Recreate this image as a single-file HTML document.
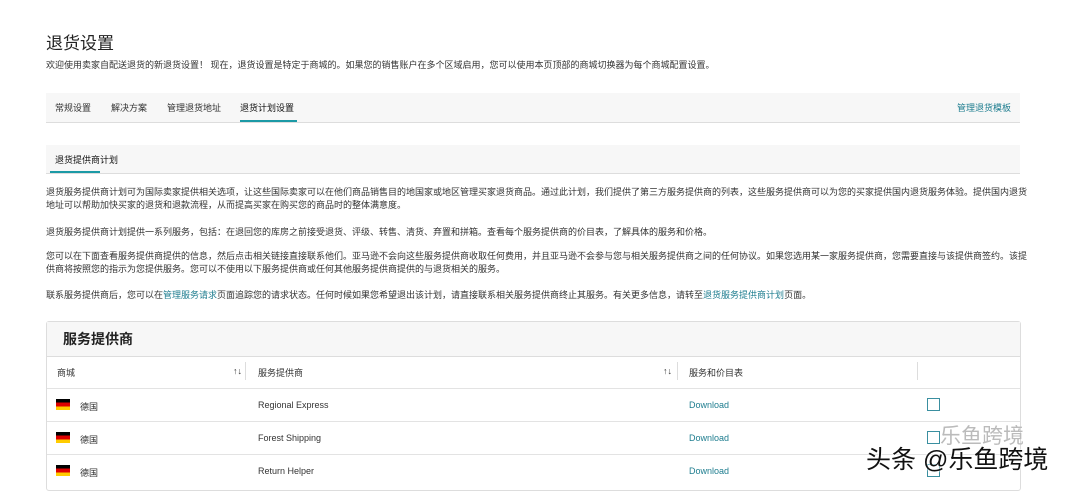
<!DOCTYPE html>
<html><head><meta charset="utf-8"><style>
*{margin:0;padding:0;box-sizing:border-box}
body{width:1080px;height:485px;overflow:hidden;background:#fff;font-family:"Liberation Sans","Noto Sans CJK SC",sans-serif;color:#333;position:relative}
.a{position:absolute;white-space:nowrap}
.s{font-size:9px}
.link{color:#1e7d8f}
</style></head><body>
<div class="a" style="left:46px;top:29px;font-size:17px;color:#222">退货设置</div>
<div class="a s" style="left:46px;top:58px">欢迎使用卖家自配送退货的新退货设置！ 现在，退货设置是特定于商城的。如果您的销售账户在多个区域启用，您可以使用本页顶部的商城切换器为每个商城配置设置。</div>

<div class="a" style="left:46px;top:93px;width:974px;height:30px;background:#f7f7f7;border-bottom:1px solid #ddd"></div>
<div class="a s" style="left:55px;top:101px">常规设置</div>
<div class="a s" style="left:111px;top:101px">解决方案</div>
<div class="a s" style="left:167px;top:101px">管理退货地址</div>
<div class="a s" style="left:240px;top:101px;color:#111">退货计划设置</div>
<div class="a" style="left:240px;top:120px;width:57px;height:2px;background:#1c9aa6"></div>
<div class="a s link" style="left:957px;top:101px">管理退货模板</div>

<div class="a" style="left:46px;top:145px;width:974px;height:29px;background:#f7f7f7;border-bottom:1px solid #ddd"></div>
<div class="a s" style="left:55px;top:153px;color:#111">退货提供商计划</div>
<div class="a" style="left:50px;top:171px;width:50px;height:2px;background:#1c9aa6"></div>

<div class="a s" style="left:46px;top:186px;line-height:13px;width:985px;white-space:normal">退货服务提供商计划可为国际卖家提供相关选项，让这些国际卖家可以在他们商品销售目的地国家或地区管理买家退货商品。通过此计划，我们提供了第三方服务提供商的列表，这些服务提供商可以为您的买家提供国内退货服务体验。提供国内退货地址可以帮助加快买家的退货和退款流程，从而提高买家在购买您的商品时的整体满意度。</div>
<div class="a s" style="left:46px;top:225px">退货服务提供商计划提供一系列服务，包括：在退回您的库房之前接受退货、评级、转售、清货、弃置和拼箱。查看每个服务提供商的价目表，了解具体的服务和价格。</div>
<div class="a s" style="left:46px;top:250px;line-height:13px;width:985px;white-space:normal">您可以在下面查看服务提供商提供的信息，然后点击相关链接直接联系他们。亚马逊不会向这些服务提供商收取任何费用，并且亚马逊不会参与您与相关服务提供商之间的任何协议。如果您选用某一家服务提供商，您需要直接与该提供商签约。该提供商将按照您的指示为您提供服务。您可以不使用以下服务提供商或任何其他服务提供商提供的与退货相关的服务。</div>
<div class="a s" style="left:46px;top:288px">联系服务提供商后，您可以在<span class="link">管理服务请求</span>页面追踪您的请求状态。任何时候如果您希望退出该计划，请直接联系相关服务提供商终止其服务。有关更多信息，请转至<span class="link">退货服务提供商计划</span>页面。</div>

<div class="a" style="left:46px;top:321px;width:975px;height:170px;border:1px solid #ddd;border-radius:3px"></div>
<div class="a" style="left:47px;top:322px;width:973px;height:35px;background:#f7f7f7;border-bottom:1px solid #ddd"></div>
<div class="a" style="left:63px;top:329px;font-size:14px;font-weight:bold;color:#222">服务提供商</div>
<div class="a s" style="left:57px;top:366px">商城</div>
<div class="a s" style="left:233px;top:366px">↑↓</div>
<div class="a" style="left:245px;top:362px;width:1px;height:18px;background:#ddd"></div>
<div class="a s" style="left:258px;top:366px">服务提供商</div>
<div class="a s" style="left:663px;top:366px">↑↓</div>
<div class="a" style="left:677px;top:362px;width:1px;height:18px;background:#ddd"></div>
<div class="a s" style="left:689px;top:366px">服务和价目表</div>
<div class="a" style="left:917px;top:362px;width:1px;height:18px;background:#ddd"></div>
<div class="a" style="left:47px;top:388px;width:973px;height:1px;background:#e3e3e3"></div>
<div class="a" style="left:47px;top:421px;width:973px;height:1px;background:#e3e3e3"></div>
<div class="a" style="left:47px;top:454px;width:973px;height:1px;background:#e3e3e3"></div>

<div class="a" style="left:56px;top:399px;width:14px;height:11px;background:linear-gradient(#000 33%,#d00 33% 66%,#fc0 66%)"></div>
<div class="a s" style="left:80px;top:400px">德国</div>
<div class="a s" style="left:258px;top:400px">Regional Express</div>
<div class="a s link" style="left:689px;top:400px">Download</div>
<div class="a" style="left:927px;top:398px;width:13px;height:13px;border:1px solid #3a8fa0"></div>

<div class="a" style="left:56px;top:432px;width:14px;height:11px;background:linear-gradient(#000 33%,#d00 33% 66%,#fc0 66%)"></div>
<div class="a s" style="left:80px;top:433px">德国</div>
<div class="a s" style="left:258px;top:433px">Forest Shipping</div>
<div class="a s link" style="left:689px;top:433px">Download</div>
<div class="a" style="left:927px;top:431px;width:13px;height:13px;border:1px solid #3a8fa0"></div>

<div class="a" style="left:56px;top:465px;width:14px;height:11px;background:linear-gradient(#000 33%,#d00 33% 66%,#fc0 66%)"></div>
<div class="a s" style="left:80px;top:466px">德国</div>
<div class="a s" style="left:258px;top:466px">Return Helper</div>
<div class="a s link" style="left:689px;top:466px">Download</div>
<div class="a" style="left:927px;top:464px;width:13px;height:13px;border:1px solid #3a8fa0"></div>

<div class="a" style="left:940px;top:420px;font-size:21px;color:#bbb">乐鱼跨境</div>
<div class="a" style="left:866px;top:440px;font-size:25px;color:#111;text-shadow:0 0 2px #fff,0 0 2px #fff">头条 @乐鱼跨境</div>
</body></html>
